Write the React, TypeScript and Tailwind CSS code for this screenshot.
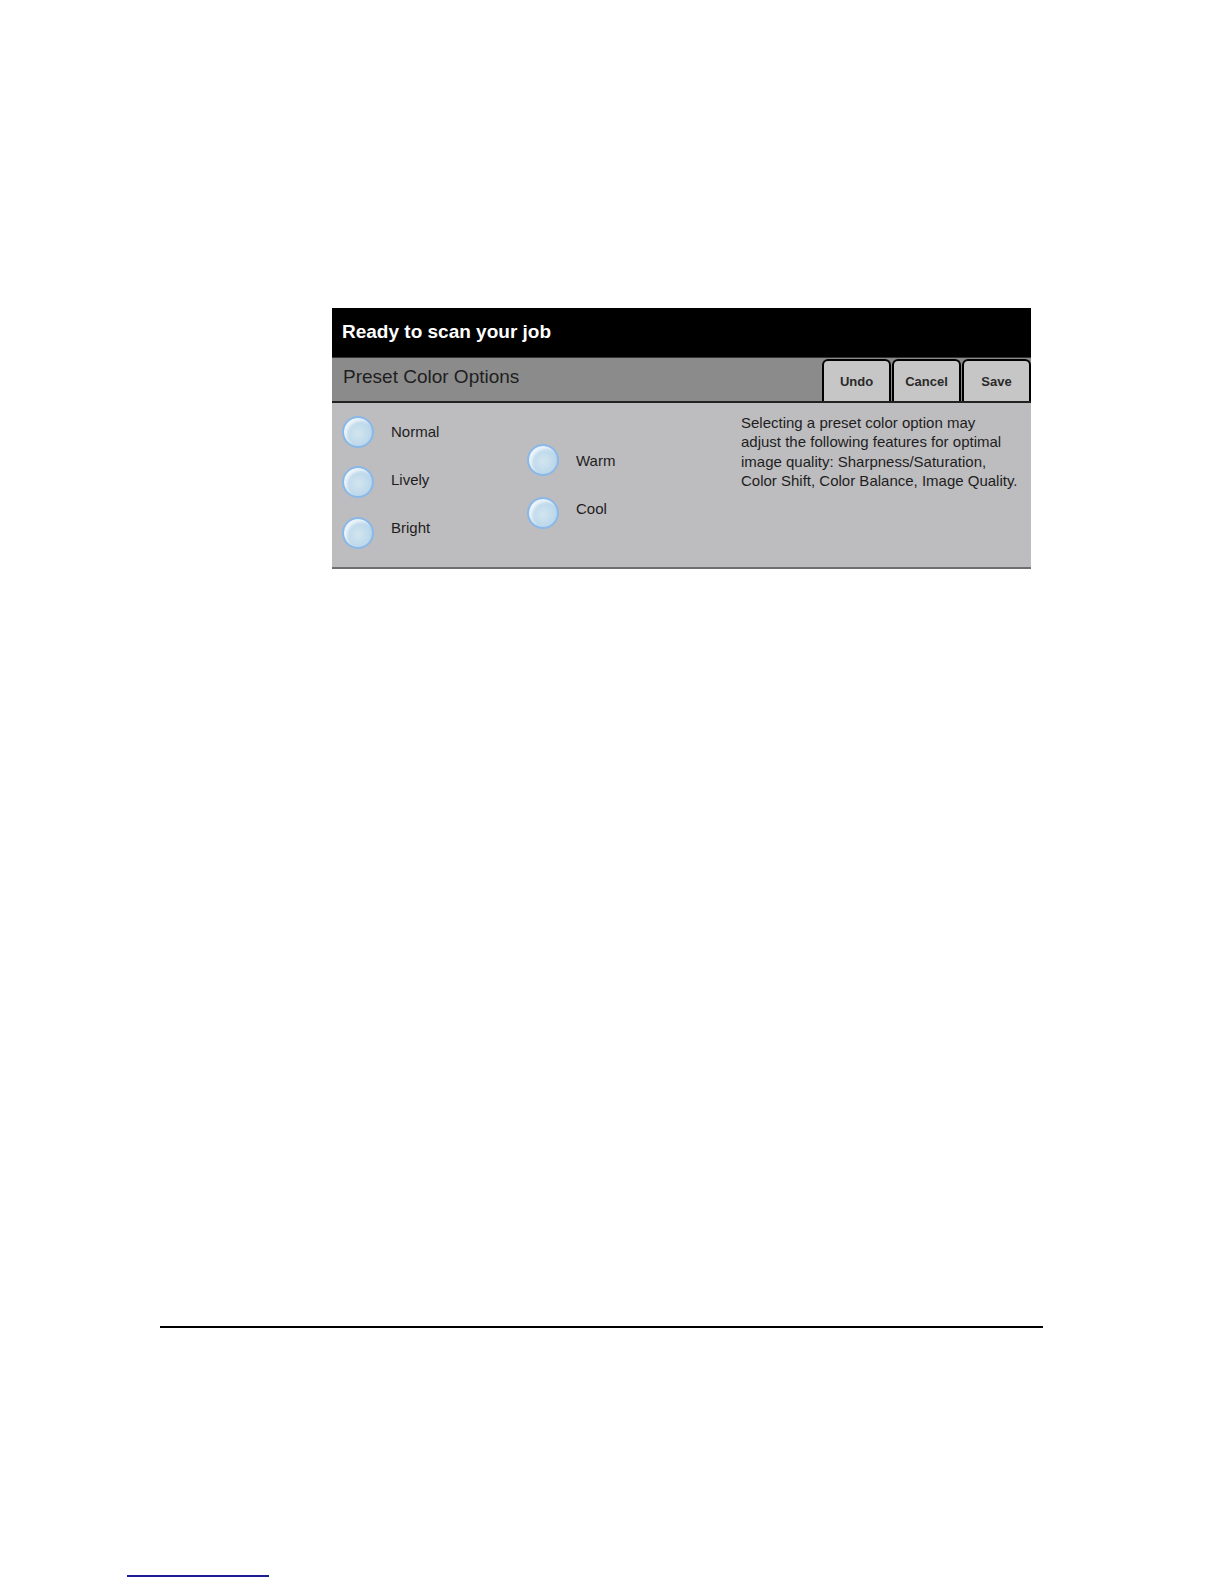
const font = { fontFamily: '"Liberation Sans", Arial, sans-serif' };

function Radio() {
  return (
    <span className="block w-[32px] h-[32px] shrink-0 rounded-full border-2 border-[#8ab8e8] bg-[radial-gradient(circle_at_50%_55%,#d2e5ef_0%,#bed9eb_55%,#96c2ec_100%)] shadow-[inset_3px_3px_3px_rgba(255,255,255,0.75)]" />
  );
}

function Option({ label, labelPad }: { label: string; labelPad: string }) {
  return (
    <div className="flex items-start gap-[17px]">
      <Radio />
      <span className={`text-[15px] leading-[18px] text-[#1e1e1e] ${labelPad}`}>{label}</span>
    </div>
  );
}

function ToolButton({ label }: { label: string }) {
  return (
    <button className="w-[69px] h-[42px] rounded-t-[6px] border-2 border-b-0 border-black bg-[#c6c6c6] text-[13px] font-bold text-[#2a2a2a] pt-[2px]">
      {label}
    </button>
  );
}

export default function App() {
  return (
    <div className="w-full min-h-screen bg-white pt-[308px] pb-[4px] overflow-hidden" style={font}>
      {/* Panel */}
      <div className="ml-[332px] w-[699px]">
        <div className="h-[50px] bg-black border-b border-[#333] flex items-center px-[10px]">
          <span className="text-[19px] font-bold text-white">Ready to scan your job</span>
        </div>
        <div className="h-[45px] bg-[#8b8b8b] border-b-2 border-[#222] flex items-end justify-between pl-[11px]">
          <span className="self-center text-[19px] text-[#1e1e1e] pb-[4px]">Preset Color Options</span>
          <div className="flex gap-[1px]">
            <ToolButton label="Undo" />
            <ToolButton label="Cancel" />
            <ToolButton label="Save" />
          </div>
        </div>
        <div className="h-[166px] bg-[#bdbcbe] border-b-2 border-[#6f6f6f] flex pl-[10px]">
          <div className="w-[185px] pt-[13px] flex flex-col">
            <Option label="Normal" labelPad="pt-[7px]" />
            <div className="mt-[18px]">
              <Option label="Lively" labelPad="pt-[5px]" />
            </div>
            <div className="mt-[19px]">
              <Option label="Bright" labelPad="pt-[2px]" />
            </div>
          </div>
          <div className="w-[214px] pt-[41px] flex flex-col">
            <Option label="Warm" labelPad="pt-[8px]" />
            <div className="mt-[21px]">
              <Option label="Cool" labelPad="pt-[3px]" />
            </div>
          </div>
          <p className="pt-[10px] text-[15px] leading-[19.3px] text-[#1e1e1e] whitespace-nowrap">
            Selecting a preset color option may
            <br />
            adjust the following features for optimal
            <br />
            image quality: Sharpness/Saturation,
            <br />
            Color Shift, Color Balance, Image Quality.
          </p>
        </div>
      </div>

      {/* Footer rule */}
      <div className="ml-[160px] w-[883px] h-[2px] bg-black mt-[757px]" />
      <div className="ml-[127px] w-[142px] h-[2px] bg-[#1c1c96] mt-[247px]" />
    </div>
  );
}
